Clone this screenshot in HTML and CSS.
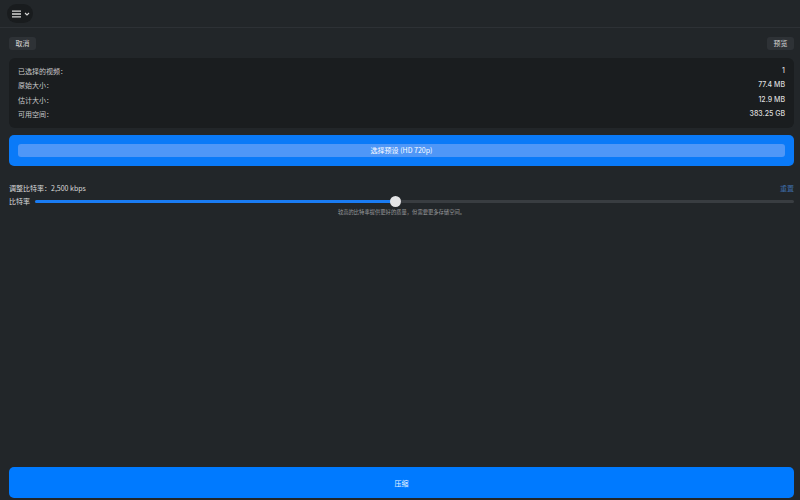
FILE: index.html
```html
<!DOCTYPE html>
<html lang="zh-CN">
<head>
  <meta charset="UTF-8">
  <meta name="viewport" content="width=device-width, initial-scale=1.0">
  <title>压缩视频</title>
  <link rel="stylesheet" href="styles.css">
</head>
<body>
  <div class="top-bar">
    <button class="menu-pill">
      <svg width="12" height="8" viewBox="0 0 12 8"><path d="M1 1.2h9M1 4h9M1 6.8h9" stroke="#d8d8d8" stroke-width="1.3"/></svg>
      <svg width="6" height="4" viewBox="0 0 6 4"><path d="M1 1l2 2 2-2" stroke="#d8d8d8" stroke-width="1.1" fill="none"/></svg>
    </button>
  </div>

  <div class="page">
    <div class="toolbar">
      <button class="small-btn">取消</button>
      <button class="small-btn">预览</button>
    </div>

    <div class="info-card">
      <div class="info-row"><span>已选择的视频：</span><span class="val">1</span></div>
      <div class="info-row"><span>原始大小：</span><span class="val">77.4 MB</span></div>
      <div class="info-row"><span>估计大小：</span><span class="val">12.9 MB</span></div>
      <div class="info-row"><span>可用空间：</span><span class="val">383.25 GB</span></div>
    </div>

    <div class="preset-box">
      <button class="preset-btn">选择预设 (HD 720p)</button>
    </div>

    <div class="bitrate-head">
      <span>调整比特率：2,500 kbps</span>
      <span class="reset">重置</span>
    </div>
    <div class="slider-row">
      <span>比特率</span>
      <div class="track">
        <div class="fill" style="width: 47.4%"></div>
        <div class="thumb" style="left: 47.4%"></div>
      </div>
    </div>
    <p class="hint">较高的比特率提供更好的质量，但需要更多存储空间。</p>

    <div class="spacer"></div>

    <button class="compress-btn">压缩</button>
  </div>
</body>
</html>
```

FILE: styles.css
```css
*{
  box-sizing: border-box;
}
body{
  margin: 0;
  width: 800px;
  height: 500px;
  background-color: #222629;
  color: #d9dadb;
  font-family: "Noto Sans CJK SC", "Liberation Sans", sans-serif;
  font-size: 7px;
  display: flex;
  flex-direction: column;
  overflow: hidden;
}
button{
  font-family: inherit;
  border: none;
  cursor: pointer;
}
.top-bar{
  height: 28px;
  border-bottom: 1px solid #2d3135;
  padding: 4px 0 0 7px;
}
.menu-pill{
  width: 26px;
  height: 19px;
  border-radius: 10px;
  background-color: #191c1e;
  display: flex;
  align-items: center;
  justify-content: center;
  gap: 1px;
  padding: 0 0 0 1px;
}
.page{
  flex: 1;
  display: flex;
  flex-direction: column;
  padding: 0 6px 2px 9px;
}
.toolbar{
  display: flex;
  justify-content: space-between;
  margin-top: 9px;
}
.small-btn{
  height: 13px;
  padding: 0 6.5px;
  border-radius: 3px;
  background-color: #2e3236;
  color: #d6d6d6;
  font-size: 7px;
  line-height: 13px;
}
.info-card{
  margin-top: 8px;
  background-color: #1a1d1f;
  border-radius: 6px;
  padding: 6px 9px 7px 9px;
}
.info-row{
  display: flex;
  justify-content: space-between;
  height: 14.3px;
  line-height: 14px;
  color: #c8c9ca;
}
.info-row .val{
  font-family: "Inter", "Liberation Sans", sans-serif;
  font-weight: 500;
  color: #dcdcdc;
}
.preset-box{
  margin-top: 7px;
  background-color: #0a7af8;
  border-radius: 5px;
  padding: 9px;
}
.preset-btn{
  display: block;
  width: 100%;
  height: 13px;
  border-radius: 3px;
  background-color: #4f97f7;
  color: #ffffff;
  font-size: 7px;
  line-height: 13px;
  padding: 0;
}
.bitrate-head{
  display: flex;
  justify-content: space-between;
  margin-top: 16px;
  height: 12px;
  line-height: 12px;
  color: #dcdcdc;
}
.reset{
  color: #3d6aa6;
}
.slider-row{
  display: flex;
  align-items: center;
  gap: 5px;
  margin-top: 1px;
  height: 12px;
  color: #dcdcdc;
}
.track{
  flex: 1;
  height: 3px;
  background-color: #393d41;
  border-radius: 2px;
  position: relative;
}
.fill{
  height: 3px;
  background-color: #1a7cf3;
  border-radius: 2px;
}
.thumb{
  position: absolute;
  top: -4px;
  width: 11px;
  height: 11px;
  margin-left: -5px;
  border-radius: 50%;
  background-color: #e4e4e6;
}
.hint{
  margin: 1px 0 0 0;
  text-align: center;
  font-size: 5.3px;
  line-height: 9px;
  color: #9a9c9e;
}
.spacer{
  flex: 1;
}
.compress-btn{
  height: 31px;
  border-radius: 5px;
  background-color: #007aff;
  color: #eef5ff;
  font-size: 7px;
}
```
